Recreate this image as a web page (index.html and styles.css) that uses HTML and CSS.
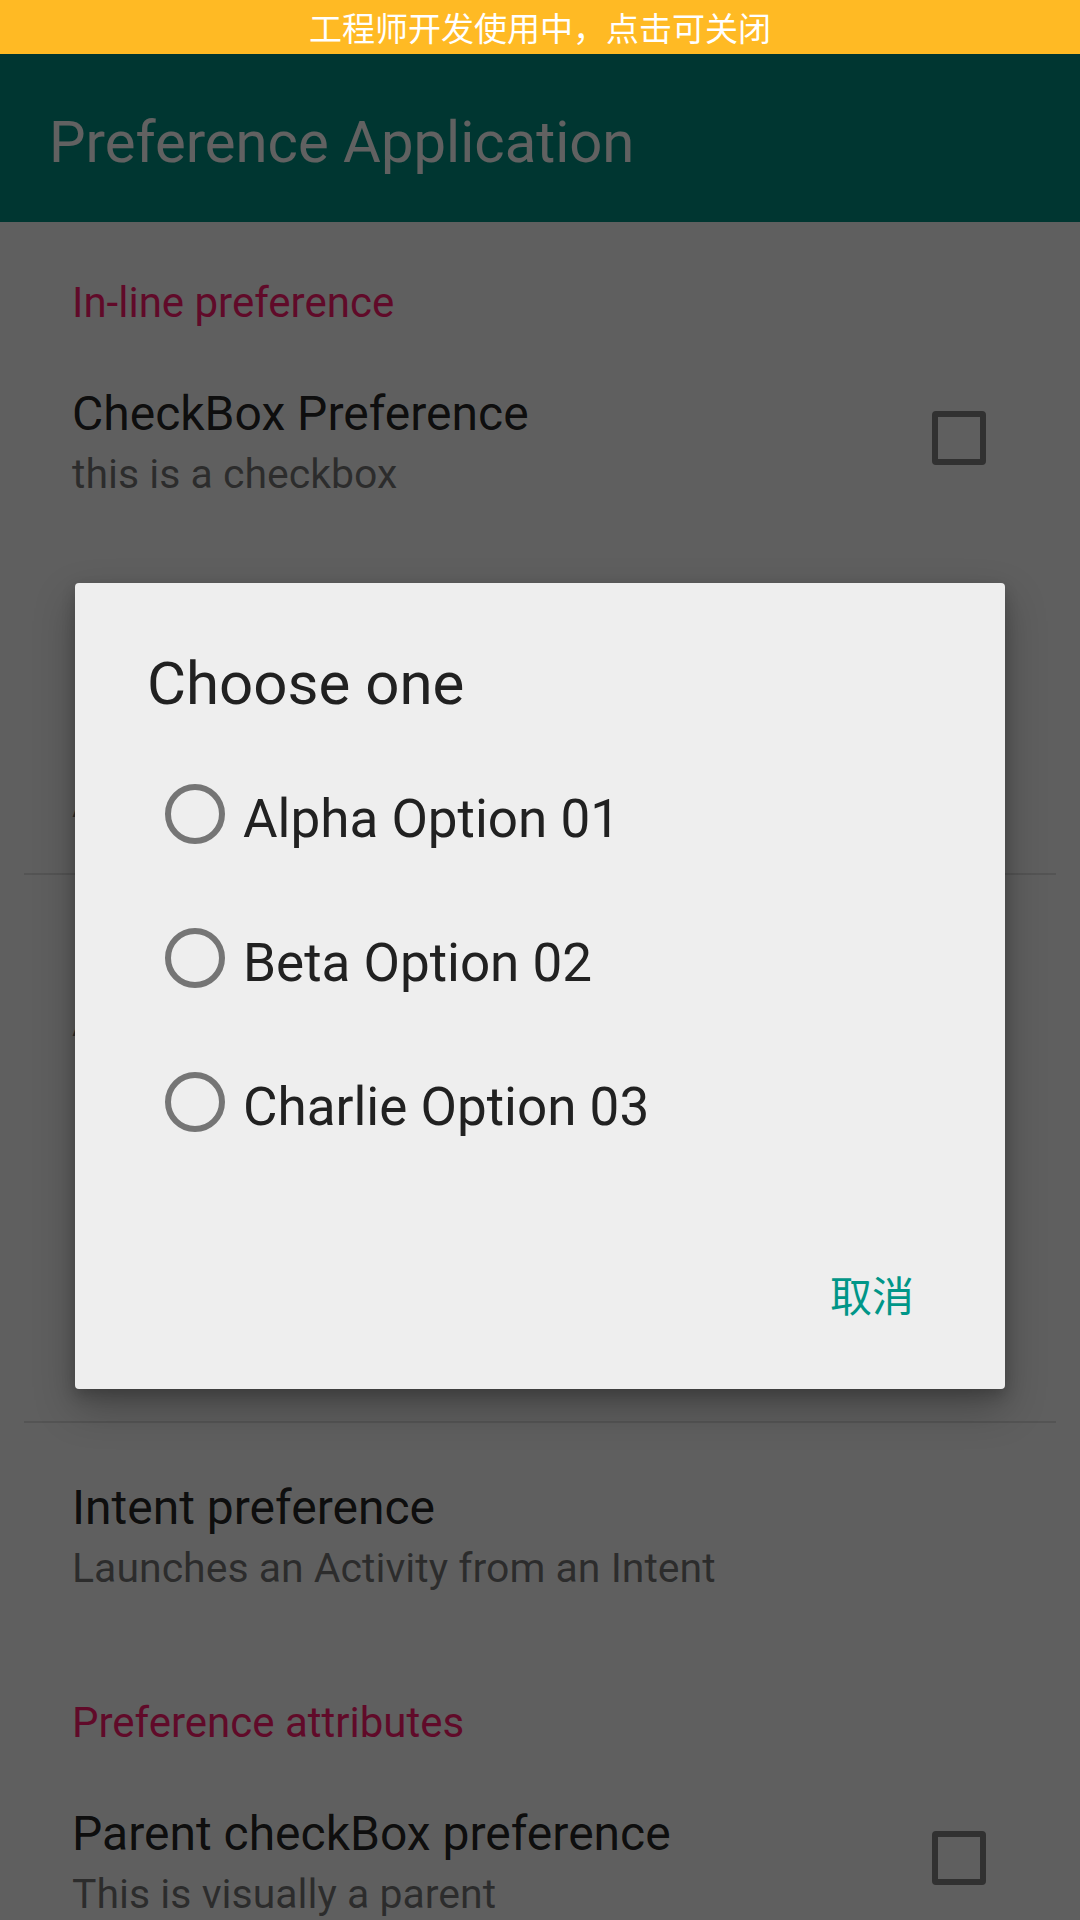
FILE: index.html
```html
<!DOCTYPE html>
<html lang="zh-CN">
<head>
<meta charset="utf-8">
<title>Preference Application</title>
<link rel="stylesheet" href="styles.css">
</head>
<body>
<div class="screen">
  <div class="devbar">工程师开发使用中，点击可关闭</div>

  <header class="appbar">
    <h1 class="appbar-title">Preference Application</h1>
  </header>

  <main class="list">
    <section class="group group-first">
      <div class="category">In-line preference</div>
      <div class="pref">
        <div class="pref-text">
          <div class="pref-title">CheckBox Preference</div>
          <div class="pref-summary">this is a checkbox</div>
        </div>
        <span class="checkbox"></span>
      </div>
      <div class="pref pref-tall">
        <div class="pref-text">
          <div class="pref-title">Edit text preference</div>
          <div class="pref-summary">An example that uses an edit text dialog</div>
        </div>
      </div>
    </section>
    <div class="divider"></div>
    <section class="group group-second">
      <div class="pref">
        <div class="pref-text">
          <div class="pref-title">List preference</div>
          <div class="pref-summary">An example that uses a list dialog</div>
        </div>
      </div>
    </section>
    <div class="divider"></div>
    <section class="group">
      <div class="pref pref-intent">
        <div class="pref-text">
          <div class="pref-title">Intent preference</div>
          <div class="pref-summary">Launches an Activity from an Intent</div>
        </div>
      </div>
      <div class="category">Preference attributes</div>
      <div class="pref">
        <div class="pref-text">
          <div class="pref-title">Parent checkBox preference</div>
          <div class="pref-summary">This is visually a parent</div>
        </div>
        <span class="checkbox"></span>
      </div>
    </section>
  </main>

  <div class="scrim">
    <div class="dialog" role="dialog">
      <h2 class="dialog-title">Choose one</h2>
      <ul class="options">
        <li class="option"><span class="radio"></span><span class="option-label">Alpha Option 01</span></li>
        <li class="option"><span class="radio"></span><span class="option-label">Beta Option 02</span></li>
        <li class="option"><span class="radio"></span><span class="option-label">Charlie Option 03</span></li>
      </ul>
      <div class="dialog-actions">
        <button class="btn-text" type="button">取消</button>
      </div>
    </div>
  </div>
</div>
</body>
</html>
```

FILE: styles.css
```css
* { box-sizing: border-box; }

html, body {
  margin: 0;
  padding: 0;
}

body {
  width: 1080px;
  height: 1920px;
  overflow: hidden;
  background: #ededed;
  font-family: Roboto, "Noto Sans CJK SC", sans-serif;
}

.screen {
  position: relative;
  width: 1080px;
  height: 1920px;
  overflow: hidden;
  background: #ededed;
}

/* developer banner */
.devbar {
  position: relative;
  z-index: 5;
  height: 54px;
  background: #ffba24;
  color: #ffffff;
  font-family: "Noto Sans CJK SC", sans-serif;
  font-size: 33px;
  line-height: 54px;
  text-align: center;
}

/* toolbar */
.appbar {
  height: 168px;
  background: #00887a;
  display: flex;
  align-items: center;
  padding: 8px 0 0 49px;
}

.appbar-title {
  margin: 0;
  font-weight: 400;
  font-size: 58px;
  line-height: 72px;
  color: #f2f2f2;
}

/* preference list */
.list {
  display: flex;
  flex-direction: column;
}

.group {
  display: flex;
  flex-direction: column;
}

.group-first { height: 651px; }
.group-second { height: 546px; }

.category {
  padding: 57px 0 0 72px;
  font-size: 42px;
  line-height: 48px;
  color: #f01a66;
}

.pref {
  display: flex;
  align-items: center;
  padding: 59px 94px 44px 72px;
}

.pref-tall { padding-top: 167px; padding-bottom: 40px; }
.pref-intent { padding-top: 57px; }

.pref-text {
  flex: 1;
  display: flex;
  flex-direction: column;
}

.pref-title {
  font-size: 48px;
  line-height: 56px;
  color: rgba(0, 0, 0, 0.87);
}

.pref-summary {
  margin-top: 2px;
  font-size: 41px;
  line-height: 60px;
  color: rgba(0, 0, 0, 0.54);
}

.checkbox {
  width: 54px;
  height: 54px;
  border: 6px solid #7a7a7a;
  border-radius: 4px;
  margin-bottom: 14px;
  flex: none;
}

.divider {
  height: 2px;
  margin: 0 24px;
  background: #d2d2d2;
}

/* modal */
.scrim {
  position: absolute;
  top: 54px;
  left: 0;
  right: 0;
  bottom: 0;
  background: rgba(0, 0, 0, 0.6);
  z-index: 3;
}

.dialog {
  position: absolute;
  top: 529px;
  left: 75px;
  width: 930px;
  height: 806px;
  background: #eeeeee;
  border-radius: 4px;
  padding-top: 65px;
  box-shadow: 0 18px 40px rgba(0, 0, 0, 0.28), 0 6px 14px rgba(0, 0, 0, 0.18);
  display: flex;
  flex-direction: column;
}

.dialog-title {
  margin: 0;
  padding-left: 72px;
  font-weight: 400;
  font-size: 60px;
  line-height: 72px;
  color: #212121;
}

.options {
  list-style: none;
  margin: 27px 0 0;
  padding: 0;
}

.option {
  height: 144px;
  display: flex;
  align-items: center;
  padding-left: 90px;
}

.radio {
  width: 60px;
  height: 60px;
  border: 6px solid #757575;
  border-radius: 50%;
  margin-bottom: 10px;
  flex: none;
}

.option-label {
  margin-left: 18px;
  font-size: 53px;
  line-height: 144px;
  color: #212121;
}

.dialog-actions {
  margin-top: 89px;
  display: flex;
  justify-content: flex-end;
  padding-right: 67px;
}

.btn-text {
  border: 0;
  background: none;
  padding: 0 24px;
  margin: 0;
  font-family: Roboto, "Noto Sans CJK SC", sans-serif;
  font-size: 42px;
  line-height: 60px;
  height: 60px;
  color: #009688;
}
```
